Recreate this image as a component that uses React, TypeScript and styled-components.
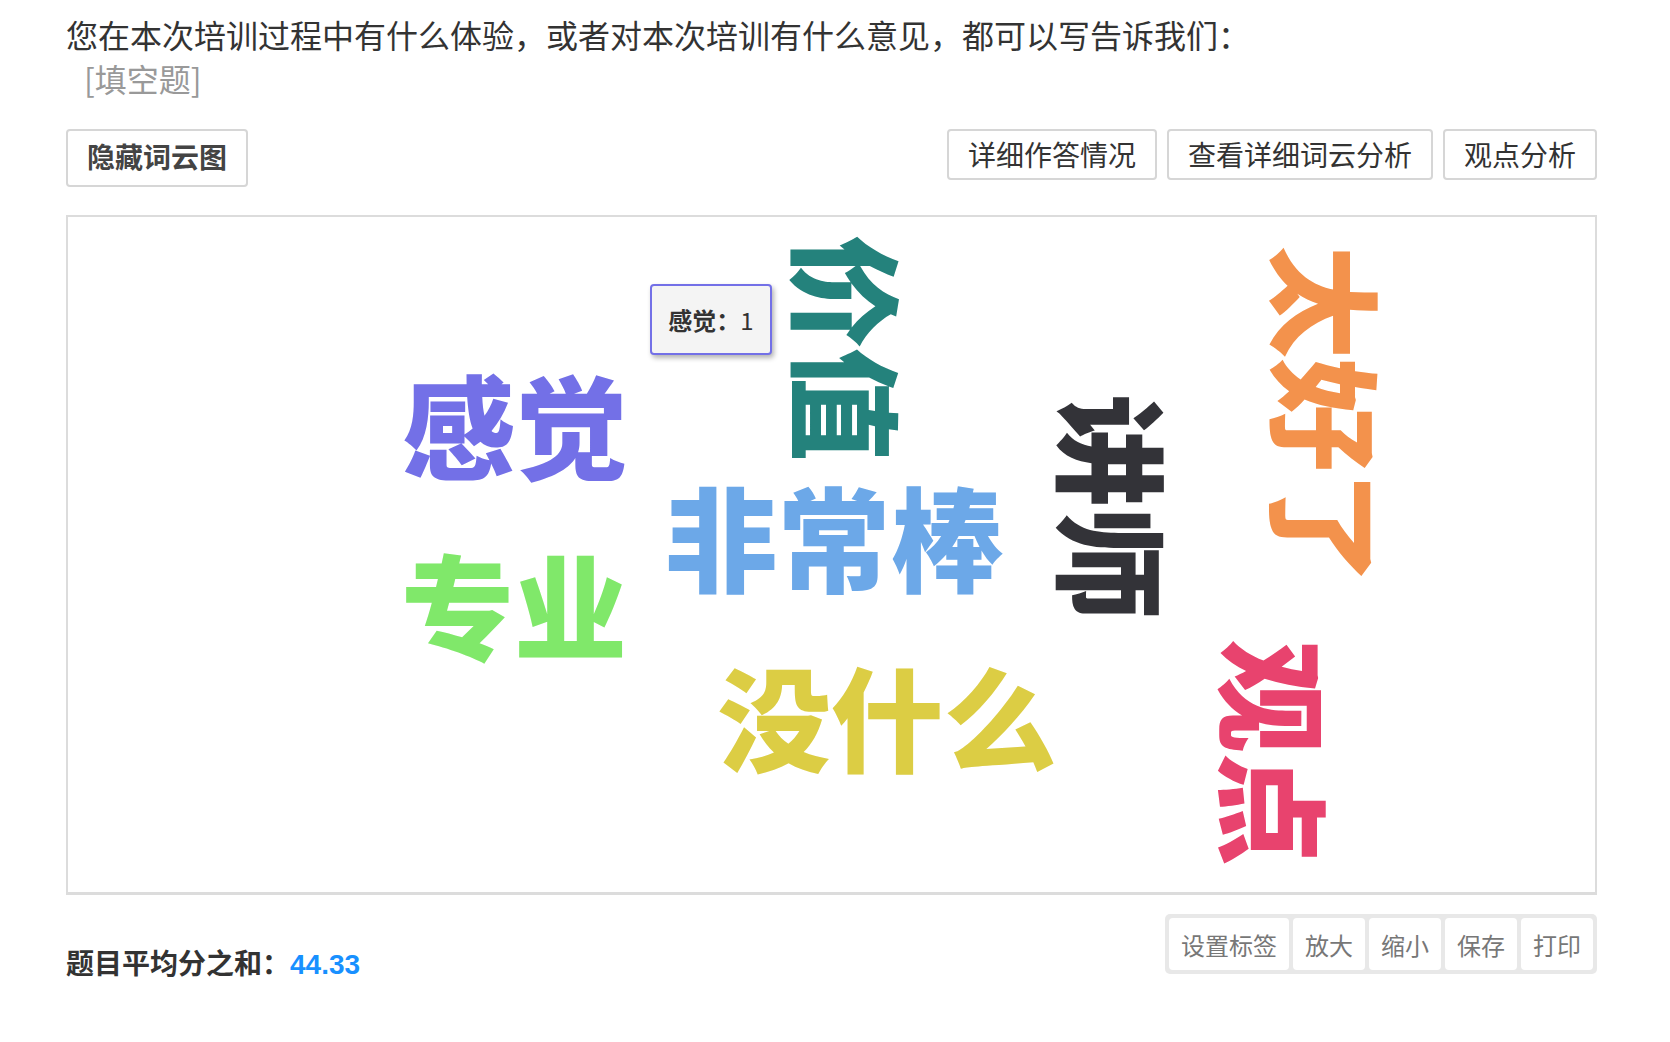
import React from "react";
import styled, { createGlobalStyle } from "styled-components";

const GlobalStyle = createGlobalStyle`
  html, body {
    margin: 0;
    padding: 0;
    background: #ffffff;
  }
  body {
    font-family: "Noto Sans CJK SC", "Noto Sans", "Liberation Sans", sans-serif;
    color: #333;
  }
`;

const Page = styled.div`
  width: 1531px;
  margin-left: 66px;
  padding-top: 12px;
  padding-bottom: 40px;
`;

const Title = styled.div`
  font-size: 32px;
  line-height: 44px;
  color: #333;
`;

const TypeTag = styled.div`
  font-size: 32px;
  line-height: 44px;
  color: #999;
  margin-left: 18px;
`;

const ActionRow = styled.div`
  display: flex;
  justify-content: space-between;
  align-items: flex-start;
  margin-top: 29px;
`;

const ActionGroup = styled.div`
  display: flex;
  gap: 10px;
`;

const OutlineButton = styled.button<{ $strong?: boolean }>`
  box-sizing: border-box;
  height: ${(p) => (p.$strong ? "58px" : "51px")};
  padding: 0 19px ${(p) => (p.$strong ? "4px" : "2px")};
  border: 2px solid #d6d6d6;
  border-radius: 4px;
  background: #fff;
  font-family: "Noto Sans CJK SC", sans-serif;
  font-size: 28px;
  font-weight: ${(p) => (p.$strong ? 700 : 400)};
  color: ${(p) => (p.$strong ? "#444" : "#333")};
  line-height: 1;
  cursor: pointer;
`;

const CloudFrame = styled.div`
  position: relative;
  box-sizing: border-box;
  margin-top: 28px;
  height: 680px;
  border: 2px solid #dcdcdc;
  border-bottom-width: 3px;
  background: #fff;
`;

const CloudSvg = styled.svg`
  display: block;
  width: 100%;
  height: 100%;
  font-family: "Noto Sans CJK SC", sans-serif;
  font-weight: 900;
`;

const Tooltip = styled.div`
  position: absolute;
  left: 582px;
  top: 67px;
  box-sizing: border-box;
  width: 122px;
  height: 71px;
  display: flex;
  align-items: center;
  justify-content: center;
  background: #f4f4f4;
  border: 2px solid #7370e7;
  border-radius: 4px;
  box-shadow: 2px 3px 5px rgba(0, 0, 0, 0.3);
  font-size: 24px;
  color: #333;
  white-space: nowrap;
`;

const TipKey = styled.span`
  font-weight: 700;
`;

const FooterRow = styled.div`
  display: flex;
  justify-content: space-between;
  align-items: flex-start;
  margin-top: 19px;
`;

const ScoreLabel = styled.div`
  margin-top: 28px;
  font-size: 28px;
  line-height: 40px;
  font-weight: 700;
  color: #333;
`;

const ScoreValue = styled.span`
  font-family: "Liberation Sans", Arial, sans-serif;
  color: #1890ff;
  font-weight: 700;
`;

const ToolGroup = styled.div`
  display: flex;
  gap: 4px;
  padding: 4px;
  background: #e8e8e8;
  border-radius: 5px;
`;

const ToolButton = styled.button`
  box-sizing: border-box;
  height: 52px;
  padding: 0 12px;
  border: none;
  border-radius: 4px;
  background: #fff;
  font-family: "Noto Sans CJK SC", sans-serif;
  font-size: 24px;
  color: #777;
  cursor: pointer;
`;

type Word = {
  text: string;
  x: number;
  y: number;
  color: string;
  vertical?: boolean;
};

const words: Word[] = [
  { text: "感觉", x: 447, y: 205, color: "#7370e7" },
  { text: "价值", x: 783, y: 131, color: "#24827c", vertical: true },
  { text: "非常棒", x: 766, y: 317, color: "#6ca8e8" },
  { text: "专业", x: 446, y: 385, color: "#80e86a" },
  { text: "没什么", x: 819, y: 497, color: "#dccd44" },
  { text: "讲师", x: 1048, y: 290, color: "#333338", vertical: true },
  { text: "太好了", x: 1262, y: 198, color: "#f3924c", vertical: true },
  { text: "观点", x: 1210, y: 536, color: "#e8436e", vertical: true },
];

export default function App() {
  return (
    <>
      <GlobalStyle />
      <Page>
        <Title>您在本次培训过程中有什么体验，或者对本次培训有什么意见，都可以写告诉我们：</Title>
        <TypeTag>[填空题]</TypeTag>

        <ActionRow>
          <OutlineButton $strong>隐藏词云图</OutlineButton>
          <ActionGroup>
            <OutlineButton>详细作答情况</OutlineButton>
            <OutlineButton>查看详细词云分析</OutlineButton>
            <OutlineButton>观点分析</OutlineButton>
          </ActionGroup>
        </ActionRow>

        <CloudFrame>
          <CloudSvg viewBox="0 0 1527 675" preserveAspectRatio="xMinYMin meet">
            {words.map((w) => (
              <text
                key={w.text}
                transform={`translate(${w.x} ${w.y})${w.vertical ? " rotate(90)" : ""}`}
                textAnchor="middle"
                dominantBaseline="central"
                fontSize={113}
                fill={w.color}
              >
                {w.text}
              </text>
            ))}
          </CloudSvg>
          <Tooltip>
            <TipKey>感觉：</TipKey>1
          </Tooltip>
        </CloudFrame>

        <FooterRow>
          <ScoreLabel>
            题目平均分之和：<ScoreValue>44.33</ScoreValue>
          </ScoreLabel>
          <ToolGroup>
            <ToolButton>设置标签</ToolButton>
            <ToolButton>放大</ToolButton>
            <ToolButton>缩小</ToolButton>
            <ToolButton>保存</ToolButton>
            <ToolButton>打印</ToolButton>
          </ToolGroup>
        </FooterRow>
      </Page>
    </>
  );
}
